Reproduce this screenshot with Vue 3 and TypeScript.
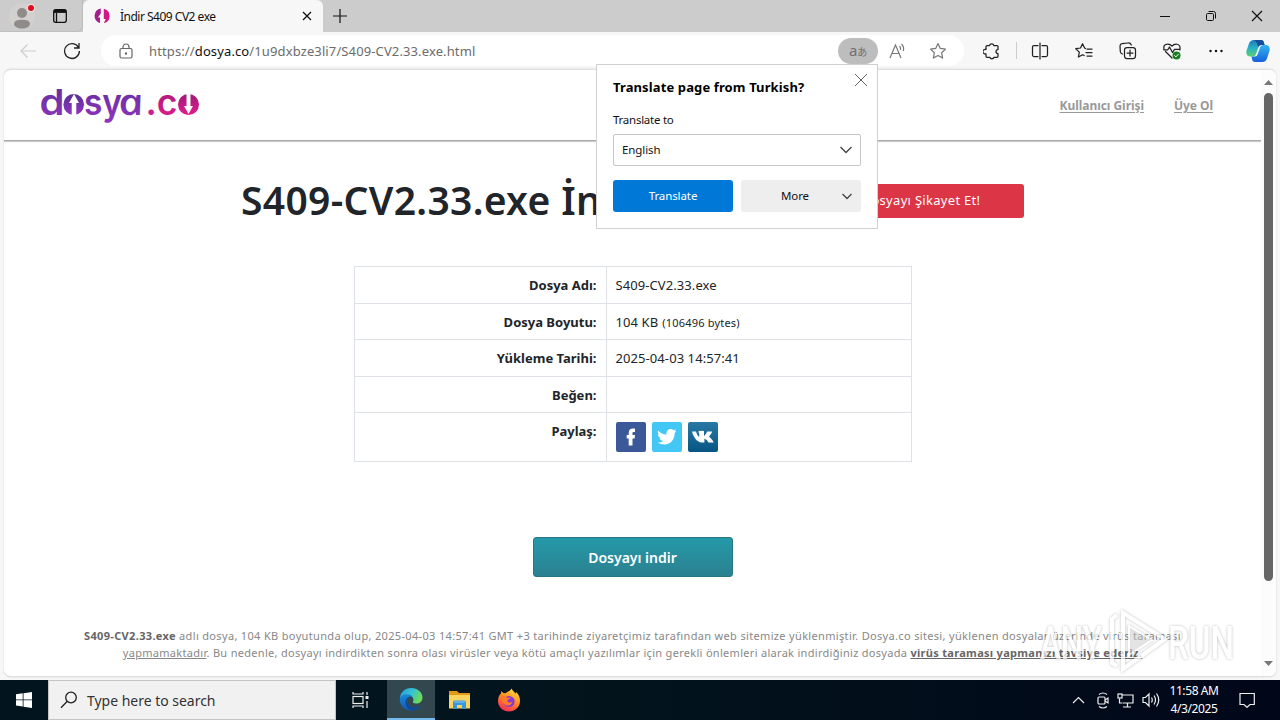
<script setup lang="ts">
interface Row { label: string; value: string; note?: string; share?: boolean }

const rows: Row[] = [
  { label: 'Dosya Adı:', value: 'S409-CV2.33.exe' },
  { label: 'Dosya Boyutu:', value: '104 KB', note: '(106496 bytes)' },
  { label: 'Yükleme Tarihi:', value: '2025-04-03 14:57:41' },
  { label: 'Beğen:', value: '' },
  { label: 'Paylaş:', value: '', share: true },
]
</script>

<template>
  <div class="screen">
    <!-- tab strip -->
    <div class="tabs">
      <div class="tabs-left">
        <svg class="avatar" width="28" height="28" viewBox="0 0 28 28">
          <circle cx="14" cy="14" r="13" fill="#d3d1d0" />
          <circle cx="14" cy="11" r="5" fill="#8f8b88" />
          <path d="M6 22c0-3.500 3.500-4.300 8-4.300s8 .8 8 4.300c0 2.700-3.500 4.500-8 4.500S6 24.700 6 22z" fill="#8f8b88" />
          <circle cx="23" cy="6" r="4" fill="#e6e6e6" />
          <circle cx="23" cy="6" r="3" fill="#e00b1c" />
        </svg>
        <svg class="ws" width="16" height="16" viewBox="0 0 16 16" fill="none" stroke="#111" stroke-width="1.300">
          <rect x="1.700" y="1.700" width="12.600" height="12.600" rx="2" />
          <path d="M2 3.400h12" stroke-width="3" /><path d="M4.500 5v9" />
        </svg>
      </div>
      <div class="tab">
        <svg width="16" height="16" viewBox="0 0 16 16">
          <path d="M6.800.6A7.500 7.500 0 0 0 5 14.800L6 15V9.500H3.900l2.900-4z" fill="#a3208c" />
          <path d="M9.800.7a7.500 7.500 0 0 1 0 14.600L11.800 11H9.800z" fill="#d01886" />
        </svg>
        <span class="tab-title">İndir S409 CV2 exe</span>
        <svg width="10" height="10" viewBox="0 0 10 10" stroke="#111" stroke-width="1.300"><path d="M1 1l8 8M9 1L1 9" /></svg>
      </div>
      <svg class="plus" width="14" height="14" viewBox="0 0 14 14" stroke="#111" stroke-width="1.200"><path d="M7 0v14M0 7h14" /></svg>
      <div class="win">
        <svg width="12" height="12" viewBox="0 0 12 12" stroke="#111" fill="none"><path d="M1 6.500h10" /></svg>
        <svg width="12" height="12" viewBox="0 0 12 12" stroke="#111" fill="none"><rect x="1.500" y="3.500" width="7" height="7" rx="1.200" /><path d="M3.500 1.500h5q2 0 2 2v5" /></svg>
        <svg width="12" height="12" viewBox="0 0 12 12" stroke="#111" fill="none" stroke-width="1.200"><path d="M1 1l10 10M11 1L1 11" /></svg>
      </div>
    </div>

    <!-- address bar -->
    <div class="toolbar">
      <svg class="back" width="18" height="16" viewBox="0 0 18 16" fill="none" stroke="#ccc" stroke-width="1.200"><path d="M17 8H2M8.500 1.500L2 8l6.500 6.500" /></svg>
      <svg class="reload" width="18" height="18" viewBox="0 0 18 18" fill="none" stroke="#222" stroke-width="1.300"><path d="M15.500 5.500A7.400 7.400 0 1 0 16.400 9M16 1v5h-5" /></svg>
      <div class="address">
        <svg class="lock" width="14" height="16" viewBox="0 0 14 16" fill="none" stroke="#666" stroke-width="1.200"><rect x="1" y="5.500" width="12" height="9.500" rx="1.500" /><path d="M4 5.500V4a3 3 0 0 1 6 0v1.500" /><circle cx="7" cy="10.500" r=".6" fill="#666" /></svg>
        <span class="url">https://<b>dosya.co</b>/1u9dxbze3li7/S409-CV2.33.exe.html</span>
        <span class="lang">a<small>あ</small></span>
        <svg class="read" width="18" height="18" viewBox="0 0 18 18" fill="none" stroke="#777" stroke-width="1.200"><path d="M1 16L6.500 3 12 16M3 11.500h7M10.500 4q1.500 1.500 1 4M12.500 2q3 3 1.800 7" /></svg>
        <svg width="18" height="18" viewBox="0 0 18 18" fill="none" stroke="#777" stroke-width="1.200" stroke-linejoin="round"><path d="M9 1.500l2.300 4.900 5.200.7-3.800 3.700.9 5.300L9 13.500l-4.600 2.600.9-5.300L1.500 7.100l5.200-.7z" /></svg>
      </div>
      <div class="tools">
        <svg width="18" height="18" viewBox="0 0 18 18" class="line"><path d="M3 6.500V4.500q0-1 1-1h2.500a2.200 2.200 0 0 1 4.300 0H14q1 0 1 1v3a2 2 0 0 0 0 4v2.800q0 1-1 1h-3a2.200 2.200 0 0 1-4.200 0H4q-1 0-1-1v-2.500a2.300 2.300 0 1 1 0-4.300z" /></svg>
        <i></i>
        <svg width="18" height="18" viewBox="0 0 18 18" class="line"><path d="M7 3.500H3q-1.500 0-1.500 1.500v8q0 1.500 1.500 1.500h4M11 3.500h4q1.500 0 1.500 1.500v8q0 1.500-1.500 1.500h-4M9 1v16" /></svg>
        <svg width="18" height="18" viewBox="0 0 18 18" class="line"><path d="M10.500 6.500L9.600 6 7.500 1.800 5.500 6l-4.700.7 3.500 3.400-.9 4.900 4.200-2.300 1.500.8M12 7h5M11 10.500h6M12 14h5" /></svg>
        <svg width="18" height="18" viewBox="0 0 18 18" class="line"><rect x="5.500" y="5.500" width="11" height="11" rx="2.500" /><path d="M3.500 12Q1.500 11.500 1.300 9.500L1 4q0-2 2-2.300L9 1q2.500-.2 3.300 2M11 8v6M8 11h6" /></svg>
        <svg width="18" height="18" viewBox="0 0 18 18" class="line"><path d="M9 16L2.500 9.500M1 7.500Q0 2 4.800 2 7.500 2 9 4.200 10.500 2 13.200 2 18 2.500 16.800 8M.8 7.800h4L6.500 5l3 5.500 2-3.200h5.500" /><circle cx="13.500" cy="13.500" r="4" fill="#188021" stroke="none" /><path d="M11.600 13.600l1.300 1.300 2.400-2.600" stroke="#fff" stroke-width="1" /></svg>
        <svg width="18" height="18" viewBox="0 0 18 18" fill="#111"><circle cx="3.500" cy="9" r="1.200" /><circle cx="9" cy="9" r="1.200" /><circle cx="14.500" cy="9" r="1.200" /></svg>
      </div>
      <svg class="copilot" width="24" height="24" viewBox="0 0 24 24">
        <defs>
          <linearGradient id="cpA" x1="0" y1="0" x2="0" y2="1"><stop offset="0" stop-color="#2179bd" /><stop offset=".5" stop-color="#26b4c4" /><stop offset="1" stop-color="#5bd06f" /></linearGradient>
          <linearGradient id="cpB" x1="0" y1="0" x2="0" y2="1"><stop offset="0" stop-color="#35b5f2" /><stop offset="1" stop-color="#1560dc" /></linearGradient>
        </defs>
        <path d="M8 1h7q2.500 0 3 3l.6 2H15q-2 0-2.700 2.500L10 15q-.8 2.500-3 2.500H3.500Q-.2 17 .4 12L3 4.500Q4.200 1 8 1z" fill="url(#cpA)" />
        <path d="M16 23H9q-2.500 0-3-3l-.5-2.500H9q2 0 2.800-2.500L14 8.500Q14.800 6 17 6h3.500q3.700.5 3.100 5.500L21 19.500Q19.800 23 16 23z" fill="url(#cpB)" />
        <path d="M8 1h7q2.500 0 3 3l.6 2H15q-1.800 0-2.500 2L11 5Q10 1 7 1z" fill="#164e9b" />
      </svg>
    </div>

    <!-- page -->
    <div class="page-wrap">
      <div class="page">
        <div class="content">
          <header class="head">
            <svg class="logo" width="162" height="38" viewBox="0 0 162 38">
              <defs>
                <linearGradient id="lgA" x1="0" y1="0" x2="0" y2="1"><stop offset="0" stop-color="#5a2f96" /><stop offset="1" stop-color="#9135bf" /></linearGradient>
                <linearGradient id="lgB" x1="0" y1="0" x2="0" y2="1"><stop offset="0" stop-color="#9c1a74" /><stop offset="1" stop-color="#e41c91" /></linearGradient>
              </defs>
              <g class="logo-text" fill="url(#lgA)">
                <text x="-.5" y="29.500" textLength="25" lengthAdjust="spacingAndGlyphs">d</text>
                <text x="44" y="29.500" textLength="38" lengthAdjust="spacingAndGlyphs">sy</text>
                <text class="logo-a" transform="translate(80.500 29.500) skewX(12)" x="0" y="0" textLength="25" lengthAdjust="spacingAndGlyphs">a</text>
              </g>
              <text class="logo-text" x="105.500" y="29.500" textLength="32" lengthAdjust="spacingAndGlyphs" fill="url(#lgB)">.c</text>
              <ellipse cx="33.700" cy="19.500" rx="10.300" ry="10.500" fill="url(#lgA)" />
              <path d="M34 9l-5 9h2.700v12.500h4.600V18H39z" fill="#fff" />
              <ellipse cx="148.500" cy="19.500" rx="10.500" ry="10.500" fill="url(#lgB)" />
              <path d="M148.500 29l-4.500-8h2.500V8h4v13h2.500z" fill="#fff" />
            </svg>
            <nav><a>Kullanıcı Girişi</a><a>Üye Ol</a></nav>
          </header>
          <div class="title-row">
            <h1>S409-CV2.33.exe İndir</h1>
            <button class="report">Dosyayı Şikayet Et!</button>
          </div>
          <div class="table">
            <div v-for="r in rows" :key="r.label" class="row">
              <div class="label">{{ r.label }}</div>
              <div class="value">
                <span v-if="r.value">{{ r.value }}</span><small v-if="r.note">{{ r.note }}</small>
                <div v-if="r.share" class="share">
                  <svg width="30" height="30" viewBox="0 0 30 30"><rect width="30" height="30" rx="2" fill="#3b5998" /><path d="M12.700 23.500V16.500h-2v-3.400h2v-2.200C12.700 8 14.500 6.500 17 6.500h2v3.500h-1.300c-1 0-1.200.5-1.200 1.400v1.700H19l-.4 3.400h-2.100v7z" fill="#fff" /></svg>
                  <svg width="30" height="30" viewBox="0 0 30 30"><rect width="30" height="30" rx="2" fill="#43c8f5" /><path d="M6 8.500q3.500 4 8.500 4.200C14 9.500 16 7 18.500 7q1.800 0 3 1.200l2.500-.9-1.500 2.200 2-.5-1.800 2C22.700 17 19 22.500 12.500 22.500q-4 0-7-2 3.500.2 5.500-1.500-2.800-.5-3.700-2.800h1.600Q6 15 6 12l1.600.5Q5 10.500 6 8.500z" fill="#fff" /></svg>
                  <svg width="30" height="30" viewBox="0 0 30 30"><defs><linearGradient id="vk" x1="0" y1="0" x2="0" y2="1"><stop offset="0" stop-color="#2878a6" /><stop offset="1" stop-color="#075582" /></linearGradient></defs><rect width="30" height="30" rx="2" fill="url(#vk)" /><path d="M4 9.500h4c.8 2.500 1.800 4.500 3 5.300.6-1 .5-3.300-.8-5.200q1.800-1.300 5.800-.6V14c1.300-.8 2.300-2.800 3.300-4.500H24c0 1.500-1.700 3.300-3 5 1.500 1.400 4 3.800 4.600 6h-5c-1.200-1.700-2.600-3.400-4.200-3.700v3.700h-2.600C8.500 20.200 5.300 14.500 4 9.500z" fill="#fff" /></svg>
                </div>
              </div>
            </div>
          </div>
          <button class="download">Dosyayı indir</button>
          <div class="notice">
            <div class="n1"><b>S409-CV2.33.exe</b> adlı dosya, 104 KB boyutunda olup, 2025-04-03 14:57:41 GMT +3 tarihinde ziyaretçimiz tarafından web sitemize yüklenmiştir. Dosya.co sitesi, yüklenen dosyalar üzerinde virüs taraması</div>
            <div class="n2"><u>yapmamaktadır</u>. Bu nedenle, dosyayı indirdikten sonra olası virüsler veya kötü amaçlı yazılımlar için gerekli önlemleri alarak indirdiğiniz dosyada <b><u>virüs taraması yapmanızı tavsiye ederiz.</u></b></div>
          </div>
        </div>
        <div class="scroll">
          <svg width="9" height="5" viewBox="0 0 9 5"><path d="M4.500 0L9 5H0z" fill="#777" /></svg>
          <div class="thumb"></div>
          <svg width="9" height="5" viewBox="0 0 9 5"><path d="M4.500 5L9 0H0z" fill="#777" /></svg>
        </div>
      </div>
    </div>

    <!-- taskbar -->
    <div class="taskbar">
      <div class="start"><svg width="16" height="16" viewBox="0 0 16 16" fill="#fff"><path d="M0 2.200l6.700-.9v6.200H0zM7.500 1.200L16 0v7.500H7.500zM0 8.300h6.700v6.200L0 13.600zM7.500 8.300H16V16l-8.500-1.200z" /></svg></div>
      <div class="search">
        <svg width="18" height="18" viewBox="0 0 18 18" fill="none" stroke="#222" stroke-width="1.300"><circle cx="11" cy="6.500" r="5.300" /><path d="M7.300 10.300L1 16.800" /></svg>
        <span>Type here to search</span>
      </div>
      <div class="slot views"><svg width="17" height="18" viewBox="0 0 17 18" fill="none" stroke="#eee" stroke-width="1.200"><path d="M1 1v2h10V1M1 17v-2h10v2" /><rect x="1" y="5.500" width="10" height="7" /><path d="M15 1v3M15 10v7" /><path d="M15 5v3" stroke-width="3" /></svg></div>
      <div class="slot active">
        <svg width="24" height="24" viewBox="0 0 24 24">
          <defs>
            <linearGradient id="edA" x1="0" y1="0" x2="1" y2=".4"><stop offset="0" stop-color="#249bdc" /><stop offset=".55" stop-color="#35c4d2" /><stop offset="1" stop-color="#6adb5b" /></linearGradient>
            <linearGradient id="edB" x1="0" y1="0" x2="0" y2="1"><stop offset="0" stop-color="#1789d8" /><stop offset="1" stop-color="#1558b2" /></linearGradient>
          </defs>
          <path d="M1 12C1 5 6 1 12 1c7 0 11.500 4.500 11.500 9.500 0 4-3 6-6.300 6-2.500 0-3.800-1-3.200-2 1.500-2.500-.5-6-4.500-6S2 9.500 1 12z" fill="url(#edA)" />
          <path d="M.8 12C2 8.500 5 7.300 8.300 7.300c2 0 4 .8 5 2.200-3-.5-5 1.700-5 4.300 0 4 4 7 8.500 6.500 2-.3 3.300-1 4.500-1.800C19.500 21.500 16 23.500 12 23.500 5.500 23.500.5 18.500.8 12z" fill="url(#edB)" />
          <path d="M8.300 13.800c0 4 4 7 8.500 6.500 2-.3 3.300-1 4.500-1.800-1.600 2.600-4.300 4.300-7.500 4.900-4.800-.8-7.800-4.500-7.300-9 .3-3 3-5.200 6.800-4.900-3-.5-5 1.700-5 4.300z" fill="#0d4a96" />
        </svg>
      </div>
      <div class="slot files"><svg width="22" height="20" viewBox="0 0 22 20"><path d="M0 1h8l2 2h11v5H0z" fill="#e39a17" /><path d="M0 5h21v13.500H0z" fill="#fbd45f" /><path d="M4 19v-7q0-1.500 1.500-1.500h10Q17 10.500 17 12v7h-4v-4H8v4z" fill="#3a96dc" /><path d="M5 12h11" stroke="#83c5f3" /></svg></div>
      <div class="slot">
        <svg width="24" height="24" viewBox="0 0 24 24">
          <defs><linearGradient id="ff" x1=".8" y1="0" x2=".3" y2="1"><stop offset="0" stop-color="#ffe645" /><stop offset=".45" stop-color="#ff9123" /><stop offset="1" stop-color="#f52a56" /></linearGradient></defs>
          <path d="M14.500.5c1 2.300 3 3.300 4.200 5.200l.4-1.600C22 7 23 9.500 23 13c0 6-5 10.500-11 10.500S1 19 1 13c0-3.500 1.200-6 3-7.500L4.300 3l2 2 2.200.2C10.500 3.500 13 3.500 14.500.5z" fill="url(#ff)" />
          <circle cx="12" cy="13.500" r="5.600" fill="#8539d6" />
          <path d="M4 9c2-1.500 5-1 6 .8h3.500c-.5 1.500-3 1.700-3.300 3.200 1 2 4.500 1.500 5.300.5-.5 3.500-3.500 4.500-6 4S5 13.500 4 9z" fill="#ff7a29" />
        </svg>
      </div>
      <div class="tray">
        <svg width="13" height="8" viewBox="0 0 13 8" class="t"><path d="M1 7l5.500-5.500L12 7" /></svg>
        <svg width="12" height="17" viewBox="0 0 12 17" class="t"><rect x="1" y="5" width="7" height="7" rx="1" /><path d="M8 8l3-2v5L8 9M2 2.500Q6-.5 10 2.500M2 14.500q4 3 8 0" /></svg>
        <svg width="17" height="15" viewBox="0 0 17 15" class="t"><path d="M5 2h11v8H5.500M10.500 10v4M6 14h8M2.500 5.500V10H5" /><rect x="1" y="1" width="4" height="4" fill="#020b1b" /></svg>
        <svg width="18" height="16" viewBox="0 0 18 16" class="t"><path d="M1 5.500v5h2.500L7 14V2L3.500 5.500zM9.500 5.500q1.500 2.500 0 5M12 3.500q3 4.500 0 9M14.500 1.500q4.500 6.500 0 13" /></svg>
        <div class="clock"><span>11:58 AM</span><span>4/3/2025</span></div>
        <svg width="16" height="16" viewBox="0 0 16 16" class="t"><path d="M1 1.500h14.300v11H11L8 15.300l-3-2.800H1z" /></svg>
      </div>
    </div>

    <!-- translate popup -->
    <div class="popup">
      <div class="p-head">
        <strong>Translate page from Turkish?</strong>
        <svg width="14" height="14" viewBox="0 0 14 14" stroke="#666"><path d="M1 1l12 12M13 1L1 13" /></svg>
      </div>
      <label>Translate to</label>
      <div class="select"><span>English</span><svg width="12" height="8" viewBox="0 0 12 8" class="chev"><path d="M.5 1L6 6.500 11.500 1" /></svg></div>
      <div class="p-btns">
        <button class="primary">Translate</button>
        <button class="more"><span>More</span><svg width="10" height="7" viewBox="0 0 10 7" class="chev"><path d="M.5 1L5 5.500 9.500 1" /></svg></button>
      </div>
    </div>

    <!-- watermark -->
    <svg class="mark" width="200" height="70" viewBox="0 0 200 70">
      <g class="mark-text">
        <text x="4" y="53" textLength="62" lengthAdjust="spacingAndGlyphs">ANY</text>
        <text x="132" y="53" textLength="66" lengthAdjust="spacingAndGlyphs">RUN</text>
      </g>
      <path d="M93 20l23 14-23 15z" fill="rgba(225,225,225,.55)" stroke="#fff" stroke-width="2" />
      <path d="M87 7l42 26-42 30zM81 9l-5 4v44l5 3" fill="none" stroke="#fff" stroke-width="4" />
    </svg>
  </div>
</template>

<style>
html, body { margin: 0; overflow: hidden; }
</style>

<style scoped>
* { box-sizing: border-box; }
.screen { position: relative; width: 1280px; height: 720px; display: flex; flex-direction: column; overflow: hidden; background: #f7f7f7; font-family: "Noto Sans", "Open Sans", "Noto Sans CJK JP", sans-serif; color: #111; }
svg { display: block; flex: none; }
button { border: 0; margin: 0; padding: 0; font-family: inherit; }

.tabs { height: 32px; display: flex; align-items: center; background: #ccc; flex: none; }
.tabs-left { width: 83px; height: 32px; display: flex; align-items: center; padding-left: 8px; border-bottom-right-radius: 6px; border-bottom: 1px solid #bfbfbf; border-right: 1px solid #bbb; gap: 16px; }
.tab { width: 240px; height: 32px; display: flex; align-items: center; background: #f7f7f7; padding: 0 11px; border-radius: 6px 6px 0 0; }
.tab-title { flex: 1; font-size: 12px; letter-spacing: -.5px; margin-left: 10px; }
.plus { margin-left: 10px; }
.win { margin-left: auto; display: flex; gap: 34px; padding-right: 17px; }

.toolbar { height: 37px; flex: none; display: flex; align-items: center; background: #f7f7f7; }
.back { margin-left: 19px; }
.reload { margin-left: 26px; }
.address { margin-left: 20px; width: 863px; height: 31px; border-radius: 16px; background: #fff; display: flex; align-items: center; padding: 0 17px 0 18px; }
.url { margin-left: 16px; flex: 1; font-size: 13px; letter-spacing: .12px; color: #6c6c6c; }
.url b { font-weight: 400; color: #111; }
.lang { width: 40px; height: 26px; border-radius: 13px; background: #bdbdbd; color: #707070; font-size: 15px; line-height: 24px; text-align: center; letter-spacing: -.3px; margin-right: 0; }
.lang small { font-size: 10px; }
.read { margin: 0 22px 0 11px; }
.tools { margin-left: 19px; display: flex; align-items: center; gap: 26px; }
.tools i { width: 1px; height: 17px; background: #ccc; margin: 0 -12px 0 -11px; }
.line { fill: none; stroke: #222; stroke-width: 1.25; stroke-linejoin: round; stroke-linecap: round; }
.copilot { margin-left: auto; margin-right: 10px; }

.page-wrap { height: 611px; flex: none; padding: 0 4px 3px; }
.page { height: 608px; display: flex; background: #fff; border-radius: 7px; border: 1px solid #e0e0e0; border-width: 1px 0; box-shadow: 0 0 2px #d0d0d0; overflow: hidden; }
.content { width: 1257px; display: flex; flex-direction: column; align-items: center; }
.head { width: 100%; height: 71px; flex: none; border-bottom: 1px solid #aaa; box-shadow: 0 1px 1px #ccc; display: flex; justify-content: space-between; padding: 15px 48px 0 36px; }
.logo-text { font-family: Inter, Lato, sans-serif; font-weight: 600; font-size: 36px; }
.logo { overflow: visible; }
.logo-a { font-family: "Open Sans", sans-serif; font-style: italic; font-weight: 600; font-size: 37px; }
nav { display: flex; gap: 30px; font-size: 12px; font-weight: 700; color: #999; padding-top: 11px; line-height: 19px; letter-spacing: -.05px; }
nav a { text-decoration: underline; text-underline-offset: 2px; }
.title-row { width: 783px; display: flex; justify-content: space-between; align-items: center; margin-top: 29px; height: 62px; }
h1 { margin: -3px 0 0; font-size: 39px; font-weight: 600; color: #212529; letter-spacing: .33px; white-space: nowrap; line-height: 60px; }
.report { width: 206px; height: 34px; flex: none; margin-left: -80px; background: #dc3545; color: #fff; border-radius: 3px; font-size: 13px; letter-spacing: .3px; padding-bottom: 2px; }
.table { width: 558px; margin-top: 34px; border: 1px solid #dee2e6; border-bottom: 0; color: #212529; font-size: 13px; }
.row { display: flex; height: 36.5px; border-bottom: 1px solid #dee2e6; line-height: 19px; }
.row:last-child { height: 49px; }
.label { width: 252px; border-right: 1px solid #dee2e6; text-align: right; font-weight: 700; padding: 9px 9px 0 0; letter-spacing: 0; }
.value { padding: 9px 0 0 9px; letter-spacing: .08px; }
.value small { font-size: 11px; margin-left: 4px; letter-spacing: .2px; }
.share { display: flex; gap: 6px; }
.download { width: 200px; height: 40px; flex: none; margin-top: 75px; border: 1px solid #287684; border-radius: 3px; background: linear-gradient(#2599a9, #2b8190); color: #fff; font-size: 14px; font-weight: 600; }
.notice { margin-top: 50px; font-size: 11px; line-height: 17px; color: #888; text-align: center; white-space: nowrap; }
.n1 { letter-spacing: .335px; }
.n2 { letter-spacing: .3px; }
.notice b { color: #666; }
.scroll { width: 15px; display: flex; flex-direction: column; align-items: center; padding: 10px 0; background: #fcfcfc; }
.thumb { width: 9px; height: 488px; margin: 8px 0 auto; border-radius: 5px; background: #666; }

.taskbar { height: 40px; flex: none; display: flex; background: linear-gradient(90deg, #02151e, #02131c 50%, #010719); }
.start { width: 48px; display: flex; align-items: center; justify-content: center; }
.search { width: 288px; border: 1px solid #c4c4c4; background: #f1f1f1; display: flex; align-items: center; padding-left: 11px; gap: 9px; font-size: 14px; letter-spacing: -.02px; color: #333; }
.slot { width: 48px; display: flex; align-items: center; justify-content: center; }
.views { width: 51px; padding-right: 2px; }
.files { width: 50px; }
.active { background: #33474f; border-bottom: 2px solid #76b9ed; }
.tray { margin-left: auto; display: flex; align-items: center; padding-right: 25px; }
.t { fill: none; stroke: #eee; stroke-width: 1.2; margin-right: 12px; }
.tray .t:nth-child(2), .tray .t:nth-child(3) { margin-right: 8px; }
.tray .t:last-child { margin: 0; }
.clock { display: flex; flex-direction: column; text-align: center; color: #fff; font-size: 12px; line-height: 18px; letter-spacing: -.4px; width: 52px; margin: 0 19px 0 -4px; white-space: nowrap; }

.popup { position: absolute; left: 596px; top: 64px; width: 282px; height: 165px; background: #fff; border: 1px solid #d0d0d0; padding: 8px 16px; font-size: 12px; color: #111; }
.p-head { display: flex; justify-content: space-between; margin-right: -7px; height: 38px; }
.p-head strong { font-size: 13px; line-height: 28px; letter-spacing: .12px; color: #000; }
.popup label { display: block; line-height: 17px; letter-spacing: -.25px; font-size: 11.5px; }
.select { margin-top: 6px; height: 32px; border: 1px solid #c6c6c6; border-radius: 2px; display: flex; align-items: center; justify-content: space-between; padding: 0 8px; font-size: 11.5px; }
.select span { padding-bottom: 2px; letter-spacing: -.1px; }
.chev { fill: none; stroke: #444; stroke-width: 1.3; }
.p-btns { display: flex; gap: 8px; margin-top: 14px; }
.p-btns button { width: 120px; height: 32px; border-radius: 3px; font-size: 11.5px; padding-bottom: 2px; letter-spacing: -.1px; }
.primary { background: #0078d7; color: #fff; }
.more { background: #eee; display: flex; align-items: center; color: #111; padding-right: 9px; }
.more span { flex: 1; padding-left: 7px; }
.more svg { margin-top: 2px; }

.mark { position: absolute; left: 1036px; top: 606px; opacity: .72; filter: drop-shadow(0 0 1.5px rgba(0, 0, 0, .35)); pointer-events: none; }
.mark-text { font-family: Roboto, sans-serif; font-weight: 500; font-size: 46px; fill: #fff; }
</style>
